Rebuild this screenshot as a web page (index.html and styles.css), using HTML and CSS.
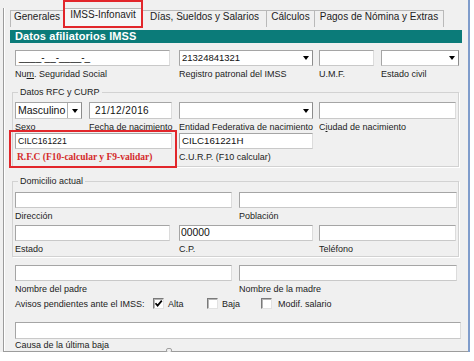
FILE: index.html
```html
<!DOCTYPE html>
<html lang="es">
<head>
    <meta charset="UTF-8">
    <title>IMSS-Infonavit</title>
    <link rel="stylesheet" href="styles.css">
</head>
<body>
    <div class="window">
        <div class="frame">
            <div class="tabs">
                <div class="tab tab-gen">Generales</div>
                <div class="tab tab-imss active">IMSS-Infonavit</div>
                <div class="tab tab-dias">Días, Sueldos y Salarios</div>
                <div class="tab tab-calc">Cálculos</div>
                <div class="tab tab-pagos">Pagos de Nómina y Extras</div>
            </div>

            <div class="page">
                <div class="header">Datos afiliatorios IMSS</div>

                <div class="row row-top">
                    <div class="fld w155">
                        <div class="box mask">____-__-____-_</div>
                        <div class="lbl">Nu<u>m</u>. Seguridad Social</div>
                    </div>
                    <div class="fld w134 g9">
                        <div class="box combo"><span class="val num">21324841321</span><span class="arrow"></span></div>
                        <div class="lbl">Registro patronal del IMSS</div>
                    </div>
                    <div class="fld w55 g6">
                        <div class="box"></div>
                        <div class="lbl">U.M.F.</div>
                    </div>
                    <div class="fld w78 g7">
                        <div class="box combo"><span class="val"></span><span class="arrow"></span></div>
                        <div class="lbl">Estado civil</div>
                    </div>
                </div>

                <!-- Datos RFC y CURP -->
                <fieldset class="group group-rfc">
                    <legend>Datos RFC y CURP</legend>
                    <div class="row">
                        <div class="fld w67">
                            <div class="box tall combo split"><span class="val big">Masculino</span><span class="arrow"></span></div>
                            <div class="lbl">Se<u>x</u>o</div>
                        </div>
                        <div class="fld w83 g7">
                            <div class="box tall date">21/12/2016</div>
                            <div class="lbl">Fec<u>h</u>a de nacimiento</div>
                        </div>
                        <div class="fld w134 g7">
                            <div class="box tall combo"><span class="val"></span><span class="arrow"></span></div>
                            <div class="lbl">Entidad Federativa de nacimiento</div>
                        </div>
                        <div class="fld w137 g6">
                            <div class="box tall"></div>
                            <div class="lbl">C<u>i</u>udad de nacimiento</div>
                        </div>
                    </div>
                    <div class="row">
                        <div class="fld w157">
                            <div class="box rfc">CILC161221</div>
                            <div class="lbl red">R.F.C (F10-calcular y F9-validar)</div>
                        </div>
                        <div class="fld w134 g7">
                            <div class="box curp">CILC161221H</div>
                            <div class="lbl">C.U.R.P. (F10 calcular)</div>
                        </div>
                    </div>
                </fieldset>

                <!-- Domicilio -->
                <fieldset class="group group-dom">
                    <legend>Domicilio actual</legend>
                    <div class="row">
                        <div class="fld w217">
                            <div class="box"></div>
                            <div class="lbl">Dirección</div>
                        </div>
                        <div class="fld w218 g7">
                            <div class="box"></div>
                            <div class="lbl">Población</div>
                        </div>
                    </div>
                    <div class="row row-gap">
                        <div class="fld w155">
                            <div class="box"></div>
                            <div class="lbl">Estado</div>
                        </div>
                        <div class="fld w134 g9">
                            <div class="box cp">00000</div>
                            <div class="lbl">C.P.</div>
                        </div>
                        <div class="fld w137 g6">
                            <div class="box"></div>
                            <div class="lbl">Teléfono</div>
                        </div>
                    </div>
                </fieldset>

                <div class="row row-padres">
                    <div class="fld w217">
                        <div class="box"></div>
                        <div class="lbl">Nombre del padre</div>
                    </div>
                    <div class="fld w218 g7">
                        <div class="box"></div>
                        <div class="lbl">Nombre de la madre</div>
                    </div>
                </div>

                <div class="avisos">
                    <span class="avisos-txt">Avisos pendientes ante el IMSS:</span>
                    <label class="opt">
                        <span class="chk">
                            <svg width="9" height="9" viewBox="0 0 9 9"><polyline points="1.5,4.2 3.6,6.6 7.8,1.6" fill="none" stroke="#000" stroke-width="1.7"/></svg>
                        </span>
                        Alta
                    </label>
                    <label class="opt"><span class="chk"></span>Baja</label>
                    <label class="opt opt-last"><span class="chk"></span>Modif. salario</label>
                </div>

                <div class="row row-causa">
                    <div class="fld w446">
                        <div class="box tall"></div>
                        <div class="lbl last">Causa de la última baja</div>
                    </div>
                </div>
            </div>
        </div>

        <div class="grip"></div>
        <div class="mark mark-tab"></div>
        <div class="mark mark-rfc"></div>
    </div>
</body>
</html>
```

FILE: styles.css
```css
/* ventana */
body {
    margin: 0;
    background: #ffffff;
    font-family: "Liberation Sans", Arial, sans-serif;
    color: #1c1c1c;
}

.window {
    position: relative;
    width: 470px;
    height: 352px;
    box-sizing: border-box;
    padding-top: 8px;
    background: #f0f0f0;
    border-right: 2px solid #7f9ccb;
}

.frame {
    margin-left: 3px;
    height: 344px;
    box-sizing: border-box;
    border-left: 1px solid #9c9c9c;
    border-bottom: 1px solid #9c9c9c;
    box-shadow: inset 1px 0 0 #ffffff;
}

/* pestañas */
.tabs {
    display: flex;
    align-items: flex-end;
    height: 19px;
    padding-left: 6px;
}

.tab {
    height: 17px;
    box-sizing: border-box;
    border: 1px solid #b9b9b9;
    border-bottom: none;
    margin-left: -1px;
    font-size: 10px;
    line-height: 11px;
    text-align: center;
    white-space: nowrap;
    background: #f0f0f0;
}

.tab.active {
    height: 19px;
    line-height: 12px;
    background: #f7f7f7;
    position: relative;
}

.tab-gen { width: 54px; margin-left: 0; }
.tab-imss { width: 80px; }
.tab-dias { width: 125px; }
.tab-calc { width: 49px; }
.tab-pagos { width: 130px; }

/* contenido */
.page {
    padding: 3px 0 0 6px;
}

.header {
    width: 452px;
    height: 13px;
    background: #0b7b79;
    color: #ffffff;
    font-size: 11px;
    font-weight: bold;
    line-height: 13px;
    padding-left: 5px;
    box-sizing: border-box;
    letter-spacing: 0.1px;
}

.row {
    display: flex;
    align-items: flex-start;
}

.page > .row,
.page > .avisos {
    padding-left: 5px;
}

.row-top { margin-top: 7px; }
.row-gap { margin-top: 3px; }
.row-padres { margin-top: 8px; }
.row-causa { margin-top: 12px; }

.fld { flex: none; }

.w55 { width: 55px; }
.w67 { width: 67px; }
.w78 { width: 78px; }
.w83 { width: 83px; }
.w134 { width: 134px; }
.w137 { width: 137px; }
.w155 { width: 155px; }
.w157 { width: 157px; }
.w217 { width: 217px; }
.w218 { width: 218px; }
.w446 { width: 446px; }

.g6 { margin-left: 6px; }
.g7 { margin-left: 7px; }
.g9 { margin-left: 9px; }

/* cajas de texto */
.box {
    height: 16px;
    box-sizing: border-box;
    background: #ffffff;
    border: 1px solid;
    border-color: #a5a5a5 #dcdcdc #c9c9c9 #a5a5a5;
    padding-left: 3px;
    font-size: 9.5px;
    line-height: 14px;
    white-space: nowrap;
    overflow: hidden;
    color: #111111;
}

.box.tall {
    height: 17px;
    line-height: 15px;
}

.mask { font-size: 10px; }
.date { font-size: 10px; letter-spacing: 0.4px; padding-left: 5px; }
.rfc { font-size: 8.7px; padding-left: 2px; }
.curp { font-size: 9.7px; padding-left: 2px; }
.cp { font-size: 10.4px; padding-left: 1px; }

.combo {
    display: flex;
    padding-left: 2px;
    border-right-color: #8c8c8c;
}

.combo .val {
    flex: 1;
    overflow: hidden;
}

.combo .val.big { font-size: 10.5px; }

.combo .arrow {
    width: 13px;
    display: flex;
    align-items: center;
    justify-content: center;
}

.combo .arrow::before {
    content: "";
    border-left: 3px solid transparent;
    border-right: 3px solid transparent;
    border-top: 4px solid #000000;
}

.combo.split .arrow {
    border-left: 1px solid #b0b0b0;
}

/* etiquetas */
.lbl {
    font-size: 9px;
    line-height: 11px;
    margin-top: 3px;
    white-space: nowrap;
}

.lbl.last { margin-top: 1px; }

.lbl.red {
    color: #d42a2a;
    font-family: "Liberation Serif", "Times New Roman", serif;
    font-weight: bold;
    font-size: 9.5px;
    padding-left: 2px;
}

/* grupos */
.group {
    width: 447px;
    box-sizing: border-box;
    margin: 0 0 0 2px;
    border: 1px solid #d2d2d2;
    box-shadow: 1px 1px 0 #ffffff;
    min-width: 0;
}

.group legend {
    font-size: 9px;
    line-height: 10px;
    padding: 0 2px;
    margin-left: 3px;
}

.group-rfc {
    margin-top: 7px;
    padding: 5px 0 3px 2px;
}

.group-dom {
    margin-top: 9px;
    padding: 6px 0 1px 2px;
}

/* avisos */
.avisos {
    display: flex;
    align-items: center;
    height: 13px;
    margin-top: 2px;
    font-size: 9px;
}

.avisos-txt {
    width: 138px;
    flex: none;
    white-space: nowrap;
}

.opt {
    display: flex;
    align-items: center;
    gap: 4px;
    width: 54px;
    flex: none;
    white-space: nowrap;
}

.opt-last {
    width: auto;
    gap: 6px;
}

.chk {
    flex: none;
    width: 11px;
    height: 11px;
    box-sizing: border-box;
    background: #ffffff;
    border: 1px solid;
    border-color: #7a7a7a #e2e2e2 #e2e2e2 #7a7a7a;
    box-shadow: inset 1px 1px 0 #b5b5b5;
    display: flex;
    align-items: center;
    justify-content: center;
}

/* marcas rojas */
.mark {
    position: absolute;
    border: 2px solid #e2262b;
    box-sizing: border-box;
}

.mark-tab {
    left: 63px;
    top: 0;
    width: 80px;
    height: 28px;
}

.mark-rfc {
    left: 9px;
    top: 130px;
    width: 168px;
    height: 38px;
}

.grip {
    position: absolute;
    left: 166px;
    top: 348px;
    width: 6px;
    height: 5px;
    box-sizing: border-box;
    border: 1px solid #a0a0a0;
    border-radius: 2px;
    background: #f0f0f0;
}
```
